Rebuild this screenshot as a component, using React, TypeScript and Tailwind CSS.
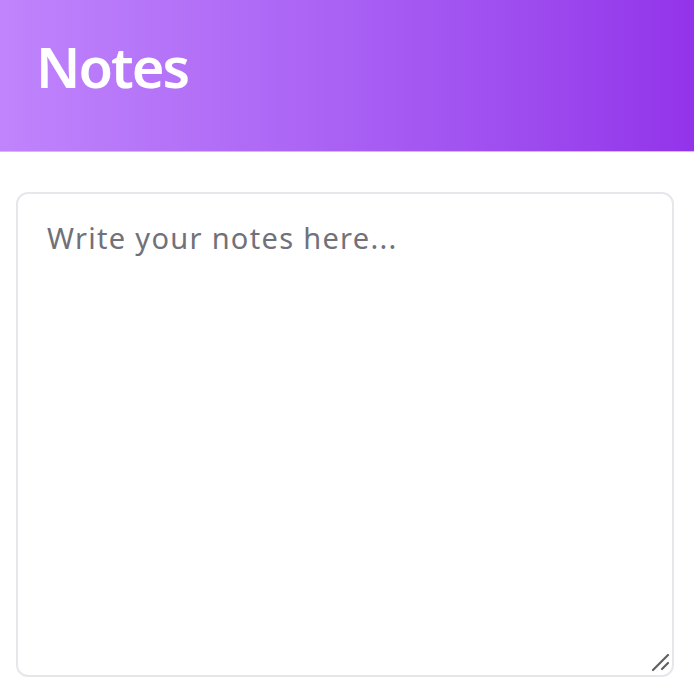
import React, { useState } from "react";

const App = () => {
  const [notes, setNotes] = useState("");

  return (
    <div className="min-h-screen bg-white font-['Noto_Sans',sans-serif]">
      <header className="h-[152px] flex items-center pl-9 bg-gradient-to-r from-[#c084fc] to-[#9333ea] border-b border-[#d8b4fe]">
        <h1 className="text-[56px] font-semibold text-white tracking-[-0.035em] leading-none -mt-5">
          Notes
        </h1>
      </header>
      <main className="pt-10 pl-4 pr-5">
        <div className="relative">
          <textarea
            value={notes}
            onChange={(e) => setNotes(e.target.value)}
            placeholder="Write your notes here..."
            className="block w-full h-[485px] resize-none rounded-xl border-2 border-[#e5e7eb] pl-[29px] pr-7 pt-[22px] pb-6 text-[29px] tracking-[0.045em] text-gray-800 placeholder:text-[#71717a] outline-none"
          />
          {/* resize grip */}
          <svg
            className="absolute right-[4px] bottom-[4px] pointer-events-none"
            width="20"
            height="20"
            viewBox="0 0 20 20"
          >
            <line x1="18" y1="2" x2="3" y2="17" stroke="#5f5f5f" strokeWidth="2.2" strokeLinecap="round" />
            <line x1="18" y1="10" x2="12" y2="16" stroke="#5f5f5f" strokeWidth="2.2" strokeLinecap="round" />
          </svg>
        </div>
      </main>
    </div>
  );
};

export default App;
